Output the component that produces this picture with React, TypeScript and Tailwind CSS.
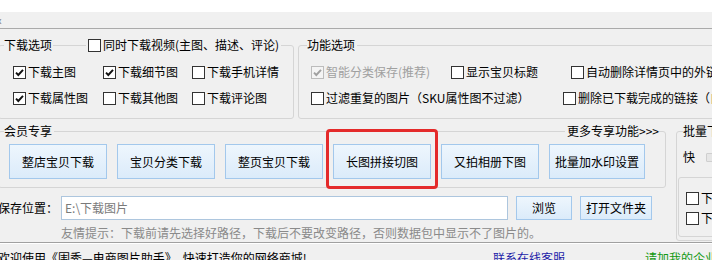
import clsx from 'clsx';

function Check({
  label,
  checked = false,
  disabled = false,
  className,
}: {
  label: string;
  checked?: boolean;
  disabled?: boolean;
  className?: string;
}) {
  return (
    <label
      className={clsx(
        'flex items-center gap-[2px] whitespace-nowrap',
        disabled ? 'text-[#a0a0a0]' : 'text-black',
        className
      )}
    >
      <span
        className={clsx(
          'flex h-[13px] w-[13px] shrink-0 items-center justify-center border',
          disabled ? 'border-[#bcbcbc] bg-[#f4f4f4]' : 'border-[#333333] bg-white'
        )}
      >
        {checked && (
          <svg width="11" height="11" viewBox="0 0 11 11">
            <path
              d="M2 5.6 L4.3 8 L9 2.8"
              fill="none"
              stroke={disabled ? '#a0a0a0' : '#111111'}
              strokeWidth="1.9"
            />
          </svg>
        )}
      </span>
      {label}
    </label>
  );
}

function Btn({ label, className }: { label: string; className?: string }) {
  return (
    <button
      className={clsx(
        'flex shrink-0 items-center justify-center border border-[#a3c8ec] bg-linear-to-b from-[#eef6fd] to-[#dbebfa] text-[12px] text-black',
        className
      )}
    >
      {label}
    </button>
  );
}

export default function App() {
  return (
    <div className="h-[260px] w-[712px] overflow-hidden bg-[#f0f0f0] font-['Noto_Sans_CJK_SC',sans-serif] text-[12px] leading-[14px] text-black">
      {/* title strip */}
      <div className="h-[12px] bg-white" />
      <div className="flex h-[17px] items-center border-b border-[#aaaaaa]">
        <span className="ml-[-3px] text-[9px] leading-[9px] text-[#777]">x</span>
      </div>

      {/* option groups */}
      <div className="ml-[-2px] mt-[8px] flex gap-[4px]">
        <fieldset className="w-[296px] shrink-0 rounded-[3px] border border-[#d5d5d5] pb-[7px] pl-[5px]">
          <legend className="pr-[2px]">
            <div className="flex h-[16px] items-center">
              <span>下载选项</span>
              <span className="mx-[1px] h-px w-[33px] bg-[#d5d5d5]" />
              <Check label="同时下载视频(主图、描述、评论)" className="ml-[1px]" />
            </div>
          </legend>
          <div className="pl-[9px] pt-[6px]">
            <div className="flex h-[26px] items-center">
              <Check label="下载主图" checked className="w-[90px]" />
              <Check label="下载细节图" checked className="w-[89px]" />
              <Check label="下载手机详情" />
            </div>
            <div className="flex h-[26px] items-center">
              <Check label="下载属性图" checked className="w-[90px]" />
              <Check label="下载其他图" className="w-[89px]" />
              <Check label="下载评论图" />
            </div>
          </div>
        </fieldset>

        <fieldset className="w-[430px] shrink-0 rounded-[3px] border border-[#d5d5d5] pb-[7px] pl-[8px]">
          <legend className="pr-[2px]">
            <div className="flex h-[16px] items-center">功能选项</div>
          </legend>
          <div className="pl-[4px] pt-[6px]">
            <div className="flex h-[26px] items-center">
              <Check label="智能分类保存(推荐)" checked disabled className="w-[140px]" />
              <Check label="显示宝贝标题" className="w-[120px]" />
              <Check label="自动删除详情页中的外链图片" />
            </div>
            <div className="flex h-[26px] items-center">
              <Check label="过滤重复的图片（SKU属性图不过滤）" className="w-[252px]" />
              <Check label="删除已下载完成的链接（自动）" />
            </div>
          </div>
        </fieldset>
      </div>

      {/* member area + batch group */}
      <div className="mt-[4px] flex h-[119px]">
        <div className="ml-[-2px] flex w-[668px] shrink-0 flex-col">
          <fieldset className="rounded-[3px] border border-[#d5d5d5] pb-[8px] pl-[5px]">
            <legend className="w-[655px]">
              <div className="flex h-[16px] items-center">
                <span>会员专享</span>
                <span className="mx-[2px] h-px flex-1 bg-[#d5d5d5]" />
                <span>更多专享功能&gt;&gt;&gt;</span>
              </div>
            </legend>
            <div className="flex gap-[10px] pl-[5px] pt-[5px]">
              <Btn label="整店宝贝下载" className="h-[35px] w-[98px]" />
              <Btn label="宝贝分类下载" className="h-[35px] w-[98px]" />
              <Btn label="整页宝贝下载" className="h-[35px] w-[98px]" />
              <div className="relative">
                <Btn label="长图拼接切图" className="h-[35px] w-[98px]" />
                <span className="pointer-events-none absolute -bottom-[10px] -left-[7px] -right-[7px] -top-[15px] rounded-[4px] border-[3px] border-[#e42a2a]" />
              </div>
              <Btn label="又拍相册下图" className="h-[35px] w-[98px]" />
              <Btn label="批量加水印设置" className="h-[35px] w-[96px]" />
            </div>
          </fieldset>

          <div className="mt-[8px] flex h-[24px] items-center">
            <span className="w-[63px] shrink-0">保存位置：</span>
            <div className="flex h-[24px] w-[447px] shrink-0 items-center border border-[#adc6de] bg-white pl-[3px] text-[#7a7a7a]">
              {'E:\\下载图片'}
            </div>
            <Btn label="浏览" className="ml-[8px] h-[24px] w-[56px]" />
            <Btn label="打开文件夹" className="ml-[8px] h-[24px] w-[72px]" />
          </div>

          <div className="mt-[6px] whitespace-nowrap pl-[63px] text-[#8a8a8a]">
            友情提示：下载前请先选择好路径，下载后不要改变路径，否则数据包中显示不了图片的。
          </div>
        </div>

        <fieldset className="ml-[10px] h-[118px] w-[60px] shrink-0 rounded-[3px] border border-[#d5d5d5] pl-[1px]">
          <legend className="ml-[5px] whitespace-nowrap">
            <div className="flex h-[16px] items-center">批量下载设置</div>
          </legend>
          <div className="mt-[8px] flex h-[20px] items-center gap-[11px] pl-[5px]">
            <span>快</span>
            <span className="h-[9px] w-[10px] shrink-0 rounded-[1px] border border-[#cfcfcf] bg-[#e6e6e6]" />
          </div>
          <div className="mt-[10px] h-[60px] rounded-[3px] border border-[#d5d5d5] pl-[7px] pt-[10px]">
            <div className="flex h-[20px] items-center">
              <Check label="下载视频" />
            </div>
            <div className="flex h-[20px] items-center">
              <Check label="下载详情" />
            </div>
          </div>
        </fieldset>
      </div>

      {/* status bar */}
      <div className="border-t border-[#a0a0a0]">
        <div className="flex whitespace-nowrap border-t border-white pt-[7px]">
          <span className="ml-[-2px] w-[495px] shrink-0">
            欢迎使用《围秀—电商图片助手》，快速打造你的网络商城!
          </span>
          <span className="w-[152px] shrink-0 text-[#1c1ca8]">联系在线客服</span>
          <span className="text-[#129912]">请加我的企业QQ</span>
        </div>
      </div>
    </div>
  );
}
